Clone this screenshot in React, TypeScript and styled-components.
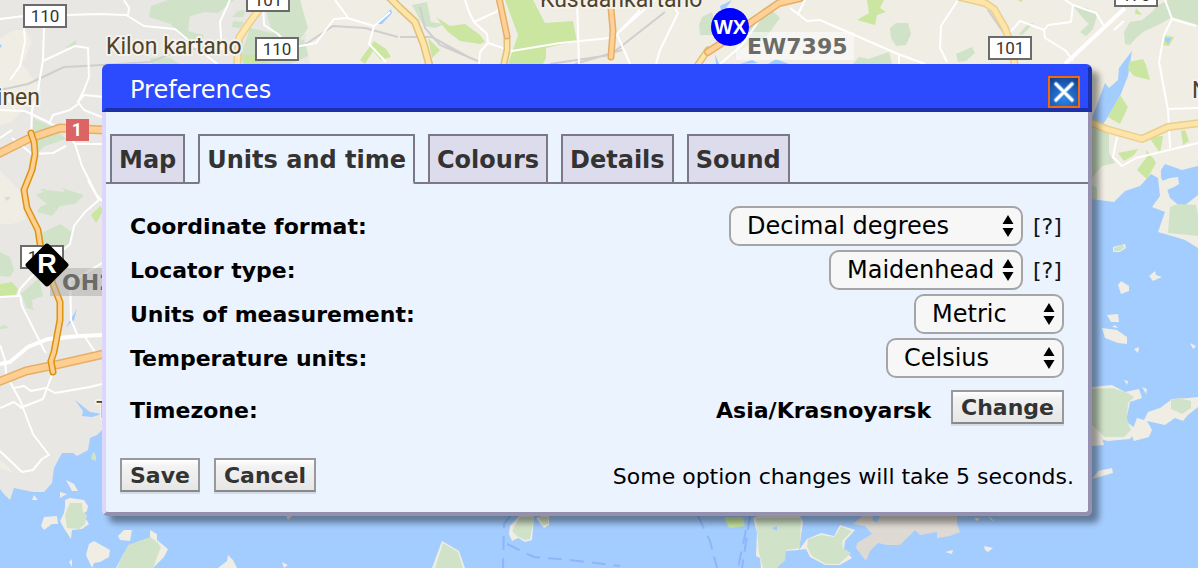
import React, { useState } from "react";
import styled, { createGlobalStyle } from "styled-components";

const GlobalStyle = createGlobalStyle`
  *, *::before, *::after { box-sizing: border-box; }
  html, body { margin: 0; padding: 0; min-height: 100%; background: #a3ccff; }
  body {
    color: #000;
    font-family: Verdana, "DejaVu Sans", sans-serif;
    font-size: 22px;
    line-height: 28px;
  }
`;

const Page = styled.main`
  position: relative;
  display: flex;
  min-height: 100vh;
  padding: 64px 106px 52px 102px;
  overflow: hidden;
`;

const Backdrop = styled.svg`
  position: absolute;
  inset: 0;
  width: 100%;
  height: 100%;
`;

const Dialog = styled.section`
  position: relative;
  display: flex;
  flex: 1;
  flex-direction: column;
  align-self: flex-start;
  min-width: 0;
  border-radius: 6px;
  box-shadow: 7px 7px 6px rgba(0, 0, 0, 0.4);
`;

const TitleBar = styled.header`
  display: flex;
  align-items: flex-end;
  justify-content: space-between;
  height: 48px;
  padding: 0 8px 0 24px;
  border: 4px solid;
  border-color: #2c4bff #1c30aa #1c30aa #2c4bff;
  border-radius: 6px 6px 0 0;
  background: #2c4bff;
`;

const Title = styled.h1`
  margin: 0;
  color: #fff;
  font-size: 24px;
  font-weight: 400;
  line-height: 36px;
`;

const CloseButton = styled.button`
  display: block;
  width: 32px;
  height: 32px;
  padding: 0;
  border: 2px solid #f26a0c;
  background: radial-gradient(circle at 50% 75%, #2b83e8, #1a5cb4 60%, #123f86);
  cursor: pointer;

  svg { display: block; }
`;

const Body = styled.div`
  padding-top: 22px;
  padding-bottom: 20px;
  border: 4px solid;
  border-top: 0;
  border-color: #9490ad #9490ad #9490ad #dfd6fb;
  border-radius: 0 0 6px 6px;
  background: #ebf3ff;
`;

const TabList = styled.div`
  display: flex;
  gap: 13px;
  padding: 0 4px;
  border-bottom: 2px solid #7a7889;
`;

const Tab = styled.button<{ $active: boolean }>`
  height: 50px;
  margin-bottom: -2px;
  padding: 2px 7px 0;
  border: 2px solid #7a7889;
  border-bottom-color: ${(p) => (p.$active ? "#ebf3ff" : "#7a7889")};
  border-radius: ${(p) => (p.$active ? "0 0 3px 3px" : "0")};
  background: ${(p) => (p.$active ? "#ebf3ff" : "#dddcec")};
  color: #333;
  font: inherit;
  font-size: 24px;
  font-weight: 700;
  cursor: pointer;
`;

const Fields = styled.div`
  display: flex;
  flex-direction: column;
  gap: 4px;
  padding: 22px 24px 0;
`;

const Row = styled.div`
  display: flex;
  align-items: center;
  justify-content: space-between;
  height: 40px;
`;

const TimezoneRow = styled(Row)`
  margin-top: 8px;
`;

const Label = styled.label`
  padding-top: 2px;
  font-weight: 700;
`;

const Controls = styled.div`
  display: flex;
  align-items: center;
  gap: 10px;
`;

const TimezoneValue = styled.div`
  display: flex;
  align-items: center;
  align-self: stretch;
  gap: 20px;

  output { padding-top: 2px; font-weight: 700; }
  button { align-self: flex-start; }
`;

const SelectBox = styled.div<{ $width: number }>`
  position: relative;
  width: ${(p) => p.$width}px;
  height: 40px;

  svg {
    position: absolute;
    top: 9px;
    right: 9px;
    pointer-events: none;
  }
`;

const Select = styled.select`
  width: 100%;
  height: 100%;
  padding: 0 24px 0 16px;
  appearance: none;
  border: 2px solid #a5a5a5;
  border-radius: 10px;
  background: #f7f7f7;
  color: #000;
  font: inherit;
  font-size: 24px;
`;

const HelpLink = styled.a`
  min-width: 31px;
  padding-top: 2px;
  color: #111;
  text-decoration: none;
`;

const PushButton = styled.button`
  height: 34px;
  padding: 2px 8px 0;
  border: 2px solid #999;
  border-bottom-color: #888;
  background: linear-gradient(#fff, #f3f3f3 20%, #e6e6e6);
  box-shadow: 0 2px 0 #d3dbe8;
  color: #333;
  font: inherit;
  font-weight: 700;
  cursor: pointer;
`;

const Footer = styled.footer`
  display: flex;
  align-items: center;
  justify-content: space-between;
  padding: 28px 14px 0;
`;

const ButtonGroup = styled.div`
  display: flex;
  gap: 14px;
`;

const Note = styled.p`
  margin: 0;
  padding-top: 4px;
`;

const ROADS = {
  white: [
    "M0 19L24 16M66 15L100 14L126 15L144 26L175 29L195 46L222 68",
    "M124 0L129 8L128 15M44 27L43 60L38 90L32 110L31 135M43 61L75 46L88 48L89 77L84 90L78 102L84 95L104 97M78 102L84 110L104 118",
    "M0 110L25 111L48 122L66 132L75 144L102 144M78 104L70 110L53 115L49 124M12 138L32 154L53 153L66 146M75 144L82 166L96 194L102 201",
    "M24 28L25 42L20 66L10 80M0 138L12 130M14 108L0 88",
    "M230 0L220 22L222 50M263 0L264 25L278 34L290 48L316 43L334 19L347 18L374 26L390 12M335 0L349 19M374 26L369 44L386 62",
    "M465 0L469 12L474 22L487 34L488 43L480 52L479 64M474 22L498 11L499 0M488 43L512 51L560 43L610 38M577 0L579 64",
    "M640 10L617 34L630 64M670 0L678 13L660 50L656 64M617 34L655 0M720 64L742 45L765 12M790 8L798 14L807 21L820 20L898 54L925 64M899 55L899 64M798 14L805 0",
    "M958 0L941 26L940 48L947 62M1005 38L1020 21L1044 30L1048 25L1071 22L1073 5L1096 13L1104 26M1044 30L1045 38L1063 49L1066 51L1073 61M1073 5L1065 0M1165 0L1172 19L1196 26M1172 19L1164 35L1159 62L1168 110L1170 148M1168 109L1198 108M1117 137L1113 157L1122 166L1136 158L1198 143M1114 30L1124 21",
    "M88 180L99 200L85 212L74 226L70 244L30 278L20 289L18 296L0 297M20 295L22 306L44 350L46 353M102 263L78 278L70 280L71 320L77 334L77 337M0 345L5 360L6 374M85 337L95 352M52 375L43 399L20 408M10 382L20 400L33 434L49 455L42 459L33 470L22 472L0 451M0 408L14 402L22 408M14 388L24 386L31 391L46 388L55 393L90 387L102 384",
  ],
  grey: [
    "M0 90L28 84L64 67L85 66L150 62L175 52L215 46M300 48L333 26L365 28L398 37",
    "M400 37L432 37L470 58M420 7L425 28L440 45L480 62M550 64L610 55L665 12M575 64L622 50M988 10L1003 32",
  ],
};

const ISLANDS = [
  "M65 500L70 498L84 500L88 506L87 511L83 514L89 524L82 529L72 530L71 539L65 530L60 521L64 513L65 507Z",
  "M44 517L57 516L58 524L52 524L44 530L41 526Z",
  "M118 536L124 530L132 530L130 541L120 540Z",
  "M86 555L89 544L94 541L110 550L109 557L100 562L94 563L92 568Z",
  "M150 530L157 534L157 540L168 549L164 557L157 564L153 568H116L124 553L137 542L150 538Z",
  "M66 480L74 484L78 491L72 491ZM60 492L67 494L60 498ZM34 495L38 500L32 500ZM69 562L72 559L72 567ZM218 568L227 561L228 555L233 560L237 568ZM282 562L288 565L284 568ZM286 516H292L288 520Z",
  "M510 526L519 516L534 516L532 540L525 542L518 538L512 541L509 534ZM536 518L542 516H549V525L544 528Z",
  "M432 568L442 541L459 551L465 568Z",
  "M753 518L763 514H799L803 522L799 550L785 551L785 560L776 568H761L760 558L756 556L757 532Z",
  "M799 550L807 539L821 533L834 536L840 525L855 530L845 541L844 549L852 558L840 565L825 565L810 557L806 549Z",
  "M1092 387L1112 385L1125 392L1139 389L1142 398L1130 402L1126 421L1137 430L1130 439L1108 441L1092 437Z",
  "M1092 435L1102 438L1104 445L1092 446Z",
  "M1131 434L1137 418L1144 420L1148 412L1160 408L1172 399L1188 398L1198 397V407L1188 415L1183 421L1175 418L1165 425L1147 421L1152 430L1149 437L1134 441Z",
  "M1092 479L1098 471L1112 468L1113 473Z",
  "M984 546L993 548L988 552L985 550ZM945 552L953 550L952 554ZM974 518L980 518L977 521ZM989 516L995 522L990 519Z",
  "M1113 247L1125 244L1126 248L1120 252H1113ZM1149 276L1155 271L1156 275L1162 277L1153 281ZM1118 285L1121 281L1129 286L1129 291L1121 294ZM1107 315L1118 314L1119 322L1111 322ZM1102 328L1117 330L1127 337V344L1118 343L1105 338ZM1112 327L1115 325L1118 328ZM1134 349L1139 347L1138 353ZM1190 343L1196 346L1193 349ZM1124 380L1128 381L1127 385ZM1142 387L1147 389L1146 394Z",
];

const PARKS = [
  "M149 17L151 6L168 0H234L218 13L205 12L190 16L188 31L204 35L202 43L194 47L178 34L171 24Z",
  "M238 11L246 10L243 17L232 17ZM233 21L244 22L240 28L232 27ZM250 28L304 40L308 56L290 64H243L240 58Z",
  "M265 0H300L308 28L298 42L285 47L273 33L268 19Z",
  "M65 48L76 40V46ZM150 58L170 58L180 64H152ZM33 118L55 128L66 139L45 146L38 152L33 146Z",
  "M412 5L427 2L431 22L445 24L435 28L424 26L420 20Z",
  "M890 28L896 23L908 23L911 34L906 45L896 46L891 38ZM956 54L972 47L975 53L966 61L958 62ZM853 64L859 57L868 59L889 52L892 64Z",
  "M1019 34L1028 24L1034 23L1022 35ZM1073 6L1088 8L1097 15L1093 29L1086 36L1080 32L1089 24L1082 17Z",
  "M1124 32L1130 22L1142 20L1152 12L1158 5L1168 0H1198V25L1172 17L1160 24L1143 32L1136 38L1130 45L1125 44Z",
  "M702 17L712 12L718 35L700 35L699 25ZM740 32L765 14L773 11L780 18L767 36L740 50Z",
  "M1092 127L1109 133V153L1115 163L1102 166L1092 178Z",
  "M1092 185L1097 188V199H1092Z",
  "M36 195L47 190L65 192L62 188L84 195L75 204L60 206L52 216L37 212L40 207L47 204ZM4 197H11L7 201ZM42 233L60 224L72 232V240L65 248L43 244Z",
  "M0 252L10 257L14 270L10 277L0 276ZM21 294L39 278L43 296L32 300L33 309L36 311L27 308Z",
  "M0 327L5 325L9 328L0 329ZM40 190L45 188V192Z",
  "M92 454L94 452L96 456V461L91 459Z",
  "M70 503L82 503L83 512L87 515L85 524L79 529L67 528L65 515Z",
  "M128 545L145 539L150 537L157 542L161 547L157 557L153 568H117L123 555Z",
  "M512 531L520 517H534L530 539L525 540L518 537ZM539 517H548V524L543 526Z",
  "M435 568L443 543L458 552L463 568Z",
  "M756 518H801L800 548L786 550L785 560L777 568H763L759 553Z",
  "M808 539L821 535L834 537L841 527L852 531L842 541L843 548L851 553L839 564L826 564L812 556L807 547Z",
  "M1092 389L1112 388L1128 393L1134 397L1128 403L1127 419L1131 430L1124 437L1105 437L1092 425Z",
  "M1171 400L1178 398L1191 401L1191 408L1182 414L1171 409Z",
  "M1170 207L1178 204L1196 205L1198 215V236L1168 233Z",
  "M1114 248L1122 245L1125 247L1120 251H1114Z",
];

const GRASS = [
  "M505 0H533L545 23L573 21L577 42L563 44L546 48V58L543 64H508L518 35Z",
  "M436 17L450 26L465 24L480 35L485 42L480 44L460 41L447 31ZM428 38L440 50L432 58Z",
  "M867 0H884L880 8L886 12L877 15L875 25L857 20L869 13Z",
  "M360 60L374 41L386 49L391 57L381 60L373 51L365 64ZM242 55H262L270 64H244Z",
  "M1129 62L1143 59L1146 65L1150 80L1134 76L1128 69ZM1108 117L1120 95L1128 107L1120 124ZM1163 35L1174 37L1169 46L1163 45ZM1136 8L1142 15L1135 14ZM1018 0H1023L1021 2Z",
  "M1118 153L1138 149L1134 155L1124 161ZM1137 170L1147 157L1146 150L1153 158L1156 163L1147 179ZM1149 137L1163 136L1160 153ZM1181 131L1185 130L1189 141L1183 145Z",
  "M91 215L100 206L102 208V213L96 223ZM0 284L12 282L18 289L15 296L0 296Z",
  "M724 517H743L745 526L729 528Z",
];

const SHIELDS = [
  { x: 24, y: 5, text: "110" },
  { x: 247, y: -11, text: "101" },
  { x: 256, y: 38, text: "110" },
  { x: 989, y: 37, text: "101" },
  { x: 1115, y: -16, text: "170" },
  { x: 21, y: 246, text: "110" },
];

const CasedRoad = ({ d, edge, fill, width }: { d: string; edge: string; fill: string; width: number }) => (
  <g fill="none" strokeLinecap="round" strokeLinejoin="round">
    <path d={d} stroke={edge} strokeWidth={width} />
    <path d={d} stroke={fill} strokeWidth={width - 3} />
  </g>
);

const paths = (list: string[]) => list.map((d, i) => <path key={i} d={d} />);

const MapBackdrop = () => (
  <Backdrop viewBox="0 0 1198 568" preserveAspectRatio="xMidYMid slice" aria-hidden="true">
    <rect width="1198" height="568" fill="#a3ccff" />
    <path
      fill="#f0ede4"
      d="M0 0H1198V248L1185 240L1172 236L1158 232L1165 212L1152 207L1160 196L1158 178L1151 174L1140 186L1125 191L1114 202L1092 199V300H0Z"
    />
    <path
      fill="#e8e7e4"
      d="M0 0H301L305 30L310 66V400L102 402V430L97 435L90 438L88 450L77 456L73 453L62 453L54 468L52 483L44 492L33 492L14 488L10 500L3 493L0 489Z"
    />
    <path fill="#f0ede4" d="M0 38L14 30L25 30L32 42L22 64L42 90L12 122L0 125ZM0 170L24 195L25 220L12 224L0 224ZM0 460L8 466L13 473L0 468Z" />
    <path
      fill="#a3ccff"
      d="M75 400L90 412L102 414L92 417L82 416L83 411ZM1132 51L1119 68L1118 80L1109 88L1105 83L1092 118V138L1106 120L1120 96L1128 76ZM1161 170L1165 164L1182 170L1198 166V195L1189 202L1182 208L1170 198L1166 186L1161 178ZM375 24L391 9L392 13L382 24ZM720 6L732 0L726 8L721 10ZM716 64L715 54L719 64ZM740 64L752 60L758 63ZM768 64L776 59L789 64ZM0 44L2 46L0 48ZM66 327L77 309L74 320Z"
    />
    <path fill="#f0ede4" d="M1162 181L1170 178L1178 177L1179 184L1174 187L1167 190Z" />
    <g fill="#f0ede4">{paths(ISLANDS)}</g>
    <g fill="#d0e3c8">{paths(PARKS)}</g>
    <path fill="#dedad3" d="M853 524L862 516L957 516V524L960 532L950 536L937 538L937 532L920 535L915 530L900 545H887L878 543L870 551L866 561L856 548L857 543L867 537L872 534L865 526Z" />
    <path fill="#a3ccff" d="M873 516H880L877 523L872 520ZM772 528L777 526L777 531Z" />
    <g fill="#cae6a1">{paths(GRASS)}</g>
    <path fill="#a3ccff" d="M1164 38L1171 38L1168 44Z" />

    <g fill="none" stroke="#cfcfcf" strokeWidth="2">{paths(ROADS.grey)}</g>
    <g fill="none" stroke="#fff" strokeWidth="2" strokeLinejoin="round">{paths(ROADS.white)}</g>
    <path d="M1125 8L1065 64M0 364L10 362L28 347L48 339L80 336L102 335" fill="none" stroke="#fff" strokeWidth="4" />

    <CasedRoad d="M258 11L247 26L239 38L237 66" edge="#e9cf8f" fill="#ffe7ad" width={8} />
    <CasedRoad d="M390 -2L400 8L415 22L424 45L430 68" edge="#dfc078" fill="#ffe4a8" width={8} />
    <CasedRoad d="M507 38L507 50L503 68" edge="#dfc078" fill="#ffe4a8" width={7} />
    <CasedRoad d="M499 -2L507 36M610 -2L613 30L611 57" edge="#e6ae69" fill="#ffd196" width={7} />
    <CasedRoad d="M708 50L697 66" edge="#dfc078" fill="#ffe4a8" width={7} />
    <CasedRoad d="M800 -2L779 3L750 23L728 39L708 52" edge="#e6ae69" fill="#ffd196" width={8} />
    <CasedRoad d="M960 -3L985 3L994 9L1005 28L1010 42L1015 66M1088 121L1106 129L1142 139L1168 127L1200 123" edge="#e9cf8f" fill="#ffe4a8" width={8} />
    <CasedRoad d="M-2 154L28 139L60 128L104 130M-2 382L26 371L60 364L104 354" edge="#e6ae69" fill="#ffcf92" width={9} />
    <CasedRoad d="M31 133L34 142L35 154L32 170L24 190L27 208L38 230L41 250L53 284L60 302L60 320L54 352L51 361L53 372" edge="#dc930f" fill="#ffcf92" width={7} />

    <g fill="none" stroke="#8db6fa" strokeWidth="2" strokeDasharray="14 8">
      <path d="M510 516L504 524L503 568M507 544L534 557L570 560L620 566M698 516L710 541L717 568M750 516L742 568M746 530L738 568" />
    </g>

    {SHIELDS.map((s, i) => (
      <g key={i}>
        <rect x={s.x} y={s.y} width="42" height="22" fill="#fff" stroke="#6b6b6b" strokeWidth="2" />
        <text x={s.x + 21} y={s.y + 17} textAnchor="middle" fontFamily="Roboto, sans-serif" fontSize="17" fill="#333">
          {s.text}
        </text>
      </g>
    ))}
    <rect x="66" y="119" width="23" height="22" fill="#db6464" />
    <text x="77" y="136" textAnchor="middle" fontFamily="Roboto, sans-serif" fontSize="18" fontWeight="700" fill="#fff">
      1
    </text>

    <g fontFamily="Roboto, sans-serif" fontSize="23" fill="#4f432b" stroke="#f4f2ec" strokeWidth="4" strokeLinejoin="round" paintOrder="stroke">
      <text x="106" y="54">Kilon kartano</text>
      <text x="540" y="7">Kustaankartano</text>
      <text x="40" y="105" textAnchor="end">inen</text>
      <text x="1192" y="98">N</text>
      <text x="96" y="418">T</text>
    </g>

    <rect x="736" y="32" width="118" height="28" fill="#fff" fillOpacity="0.5" />
    <rect x="50" y="268" width="60" height="28" fill="#aaa" fillOpacity="0.5" />
    <g fontFamily="Verdana, DejaVu Sans, sans-serif" fontWeight="700" fontSize="22" fill="#6b6b67">
      <text x="747" y="54">EW7395</text>
      <text x="62" y="290">OH2</text>
    </g>
    <g fontFamily="Liberation Sans, Arial, sans-serif" fontWeight="700" fill="#fff" textAnchor="middle">
      <circle cx="730" cy="27" r="19" fill="#0000ff" />
      <text x="730" y="34" fontSize="20">WX</text>
      <rect x="31" y="249" width="32" height="32" rx="3" fill="#000" transform="rotate(45 47 265)" />
      <text x="47" y="273" fontSize="27">R</text>
    </g>
  </Backdrop>
);

const Arrows = () => (
  <svg width="12" height="22" viewBox="0 0 12 22" aria-hidden="true">
    <path d="M6 0L11.5 9H.5ZM6 22L11.5 13H.5Z" />
  </svg>
);

const TABS = ["Map", "Units and time", "Colours", "Details", "Sound"];

const OPTIONS = [
  { id: "coord", label: "Coordinate format:", value: "Decimal degrees", width: 294, help: true },
  { id: "locator", label: "Locator type:", value: "Maidenhead", width: 194, help: true },
  { id: "units", label: "Units of measurement:", value: "Metric", width: 150, help: false },
  { id: "temp", label: "Temperature units:", value: "Celsius", width: 178, help: false },
];

export default function App() {
  const [active, setActive] = useState("Units and time");
  return (
    <>
      <GlobalStyle />
      <Page>
        <MapBackdrop />
        <Dialog role="dialog" aria-labelledby="prefs-title">
          <TitleBar>
            <Title id="prefs-title">Preferences</Title>
            <CloseButton type="button" aria-label="Close">
              <svg width="28" height="28" viewBox="0 0 28 28" fill="none" strokeLinecap="round">
                <path d="M6 6L22 22M22 6L6 22" stroke="#8fbdf0" strokeWidth="5" strokeOpacity="0.6" />
                <path d="M6 6L22 22M22 6L6 22" stroke="#fff" strokeWidth="3" />
              </svg>
            </CloseButton>
          </TitleBar>
          <Body>
            <TabList role="tablist">
              {TABS.map((name) => (
                <Tab
                  key={name}
                  type="button"
                  role="tab"
                  aria-selected={name === active}
                  $active={name === active}
                  onClick={() => setActive(name)}
                >
                  {name}
                </Tab>
              ))}
            </TabList>
            <Fields>
              {OPTIONS.map((o) => (
                <Row key={o.id}>
                  <Label htmlFor={o.id}>{o.label}</Label>
                  <Controls>
                    <SelectBox $width={o.width}>
                      <Select id={o.id} defaultValue={o.value}>
                        <option>{o.value}</option>
                      </Select>
                      <Arrows />
                    </SelectBox>
                    {o.help && <HelpLink href="#help">[?]</HelpLink>}
                  </Controls>
                </Row>
              ))}
              <TimezoneRow>
                <Label htmlFor="timezone">Timezone:</Label>
                <TimezoneValue>
                  <output id="timezone">Asia/Krasnoyarsk</output>
                  <PushButton type="button">Change</PushButton>
                </TimezoneValue>
              </TimezoneRow>
            </Fields>
            <Footer>
              <ButtonGroup>
                <PushButton type="button">Save</PushButton>
                <PushButton type="button">Cancel</PushButton>
              </ButtonGroup>
              <Note>Some option changes will take 5 seconds.</Note>
            </Footer>
          </Body>
        </Dialog>
      </Page>
    </>
  );
}
